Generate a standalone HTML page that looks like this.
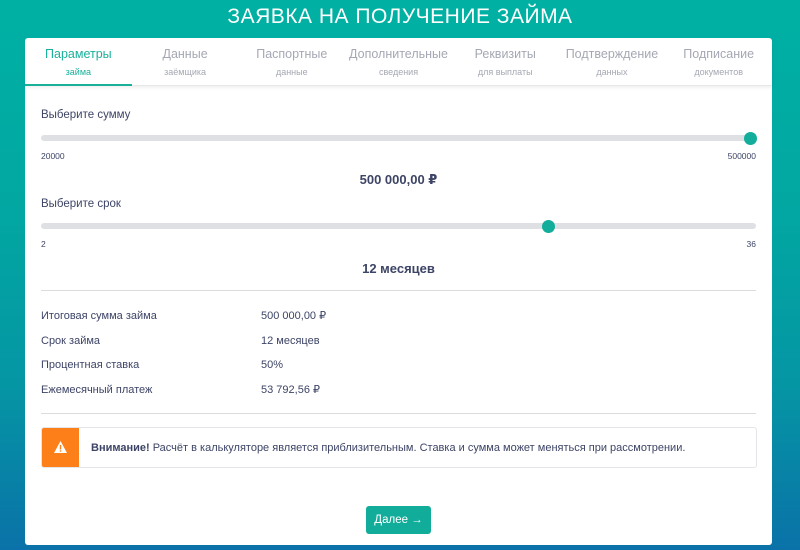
<!DOCTYPE html>
<html><head><meta charset="utf-8"><style>
*{margin:0;padding:0;box-sizing:border-box}
body{width:800px;height:550px;overflow:hidden;font-family:"Liberation Sans","DejaVu Sans",sans-serif;background:linear-gradient(180deg,#00b1a3 0%,#02a6a2 40%,#0596a4 70%,#0a72a8 100%);position:relative;color:#3d4466}
h1{position:absolute;top:5px;left:0;width:800px;text-align:center;color:#fff;font-weight:normal;font-size:21px;letter-spacing:0.5px}
.card{position:absolute;left:25px;top:38px;width:747px;height:507px;background:#fff;border-radius:3px}
.tabs{display:flex;height:48px;border-bottom:1px solid #e8e8e8;box-shadow:0 2px 3px rgba(0,0,0,.06)}
.tab{flex:1;text-align:center;color:#a5a8b3;font-size:12.5px;padding-top:9px;position:relative}
.tab small{display:block;font-size:9px;margin-top:6px}
.tab.a{color:#1ab19b}
.tab.a:after{content:"";position:absolute;left:0;right:0;bottom:-1px;height:2px;background:#1ab19b}
.abs{position:absolute}
.lbl{font-size:11.5px}
.track{position:absolute;left:16px;width:715px;height:6px;border-radius:3px;background:#dfe0e3}
.thumb{position:absolute;width:13px;height:13px;border-radius:50%;background:#13ad9c}
.small{font-size:8.5px}
.big{font-size:13px;font-weight:bold;width:747px;text-align:center;left:0}
.hr{position:absolute;left:16px;width:715px;height:1px;background:#dcdcdc}
.row{position:absolute;left:16px;font-size:11px;line-height:14px}
.row span{position:absolute;left:220px;top:0;white-space:nowrap}
.alert{position:absolute;left:16px;top:389px;width:716px;height:41px;border:1px solid #e3e5e9;border-radius:3px;overflow:hidden}
.alert .ic{position:absolute;left:0;top:0;width:37px;height:41px;background:#fd7f1a}
.alert p{position:absolute;left:49px;top:14px;font-size:11px;white-space:nowrap}
.btn{position:absolute;left:341px;top:468px;width:65px;height:28px;background:#12ad9a;border-radius:3px;color:#fff;font-size:11.5px;text-align:center;line-height:28px}
</style></head><body>
<h1>ЗАЯВКА НА ПОЛУЧЕНИЕ ЗАЙМА</h1>
<div class="card">
<div class="tabs">
<div class="tab a">Параметры<small>займа</small></div>
<div class="tab">Данные<small>заёмщика</small></div>
<div class="tab">Паспортные<small>данные</small></div>
<div class="tab">Дополнительные<small>сведения</small></div>
<div class="tab">Реквизиты<small>для выплаты</small></div>
<div class="tab">Подтверждение<small>данных</small></div>
<div class="tab">Подписание<small>документов</small></div>
</div>
<div class="abs lbl" style="left:16px;top:71px">Выберите сумму</div>
<div class="track" style="top:97px"></div>
<div class="thumb" style="left:719px;top:94px"></div>
<div class="abs small" style="left:16px;top:113px">20000</div>
<div class="abs small" style="right:16px;top:113px">500000</div>
<div class="abs big" style="top:134px">500 000,00 ₽</div>
<div class="abs lbl" style="left:16px;top:160px">Выберите срок</div>
<div class="track" style="top:185px"></div>
<div class="thumb" style="left:517px;top:182px"></div>
<div class="abs small" style="left:16px;top:201px">2</div>
<div class="abs small" style="right:16px;top:201px">36</div>
<div class="abs big" style="top:223px">12 месяцев</div>
<div class="hr" style="top:252px"></div>
<div class="row" style="top:271px">Итоговая сумма займа<span>500 000,00 ₽</span></div>
<div class="row" style="top:296px">Срок займа<span>12 месяцев</span></div>
<div class="row" style="top:320px">Процентная ставка<span>50%</span></div>
<div class="row" style="top:345px">Ежемесячный платеж<span>53 792,56 ₽</span></div>
<div class="hr" style="top:375px"></div>
<div class="alert"><div class="ic"><svg width="37" height="41"><path d="M18.5 13 L25 25 L12 25 Z" fill="#fff"/><rect x="17.8" y="17" width="1.4" height="4.5" fill="#fd7f1a"/><rect x="17.8" y="22.3" width="1.4" height="1.4" fill="#fd7f1a"/></svg></div><p><b>Внимание!</b> Расчёт в калькуляторе является приблизительным. Ставка и сумма может меняться при рассмотрении.</p></div>
<div class="btn">Далее →</div>
</div>
</body></html>
